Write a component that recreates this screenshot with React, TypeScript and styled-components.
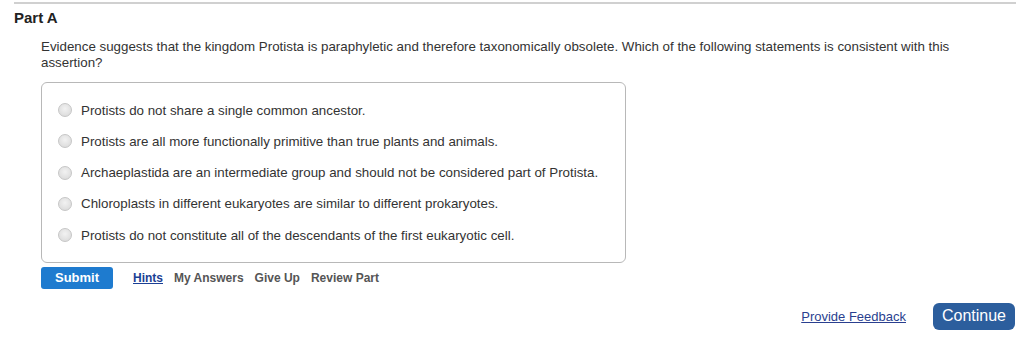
import React from "react";
import styled, { createGlobalStyle } from "styled-components";

const Global = createGlobalStyle`
  html, body { margin: 0; padding: 0; background: #fff; }
  body { font-family: Arial, "Liberation Sans", sans-serif; color: #333; }
`;

const Page = styled.div`
  width: 1024px;
  height: 342px;
  padding-top: 2px;
  box-sizing: border-box;
`;

const Rule = styled.div`
  margin: 0 8px 0 14px;
  height: 2px;
  background: #d0d0d0;
`;

const PartTitle = styled.h2`
  margin: 5px 0 0 14px;
  font-size: 15px;
  line-height: 18px;
  font-weight: bold;
  color: #222;
`;

const Body = styled.div`
  padding-left: 41px;
  margin-top: 12px;
`;

const Question = styled.p`
  margin: 0;
  width: 930px;
  font-size: 13.33px;
  line-height: 16px;
  color: #333;
`;

const OptionBox = styled.div`
  margin-top: 11px;
  width: 585px;
  box-sizing: border-box;
  border: 1px solid #b8b8b8;
  border-radius: 6px;
  padding: 11.4px 0 11px 16px;
  display: flex;
  flex-direction: column;
`;

const Option = styled.label`
  display: flex;
  align-items: center;
  height: 31.3px;
  gap: 9px;
  font-size: 13.33px;
  color: #333;
`;

const Radio = styled.span`
  width: 12px;
  height: 12px;
  border-radius: 50%;
  border: 1px solid #c6c6c6;
  background: radial-gradient(circle at 50% 40%, #f2f2f2 0%, #dcdcdc 80%);
  flex: none;
`;

const ActionRow = styled.div`
  display: flex;
  align-items: center;
  margin-top: 4px;
`;

const SubmitButton = styled.button`
  width: 72px;
  height: 22px;
  border: none;
  border-radius: 3px;
  background: #1e7bcf;
  color: #fff;
  font-family: Arial, "Liberation Sans", sans-serif;
  font-size: 13px;
  font-weight: bold;
  padding: 0;
  margin-right: 20px;
`;

const ActionLink = styled.span<{ $primary?: boolean }>`
  font-size: 12px;
  font-weight: bold;
  color: ${(p) => (p.$primary ? "#1b3f94" : "#555")};
  text-decoration: ${(p) => (p.$primary ? "underline" : "none")};
  margin-right: 11px;
`;

const Footer = styled.div`
  display: flex;
  justify-content: flex-end;
  align-items: center;
  margin-top: 14px;
  padding-right: 9px;
  gap: 27px;
`;

const FeedbackLink = styled.a`
  font-size: 13px;
  color: #2a3f8f;
  text-decoration: underline;
`;

const ContinueButton = styled.button`
  width: 82px;
  height: 27px;
  border: none;
  border-radius: 6px;
  background: #2c5e9d;
  color: #fff;
  font-family: Arial, "Liberation Sans", sans-serif;
  font-size: 16px;
  padding: 0;
`;

const options = [
  "Protists do not share a single common ancestor.",
  "Protists are all more functionally primitive than true plants and animals.",
  "Archaeplastida are an intermediate group and should not be considered part of Protista.",
  "Chloroplasts in different eukaryotes are similar to different prokaryotes.",
  "Protists do not constitute all of the descendants of the first eukaryotic cell.",
];

export default function App() {
  return (
    <Page>
      <Global />
      <Rule />
      <PartTitle>Part A</PartTitle>
      <Body>
        <Question>
          Evidence suggests that the kingdom Protista is paraphyletic and therefore taxonomically
          obsolete. Which of the following statements is consistent with this assertion?
        </Question>
        <OptionBox>
          {options.map((o) => (
            <Option key={o}>
              <Radio />
              {o}
            </Option>
          ))}
        </OptionBox>
        <ActionRow>
          <SubmitButton>Submit</SubmitButton>
          <ActionLink $primary>Hints</ActionLink>
          <ActionLink>My Answers</ActionLink>
          <ActionLink>Give Up</ActionLink>
          <ActionLink>Review Part</ActionLink>
        </ActionRow>
      </Body>
      <Footer>
        <FeedbackLink>Provide Feedback</FeedbackLink>
        <ContinueButton>Continue</ContinueButton>
      </Footer>
    </Page>
  );
}
